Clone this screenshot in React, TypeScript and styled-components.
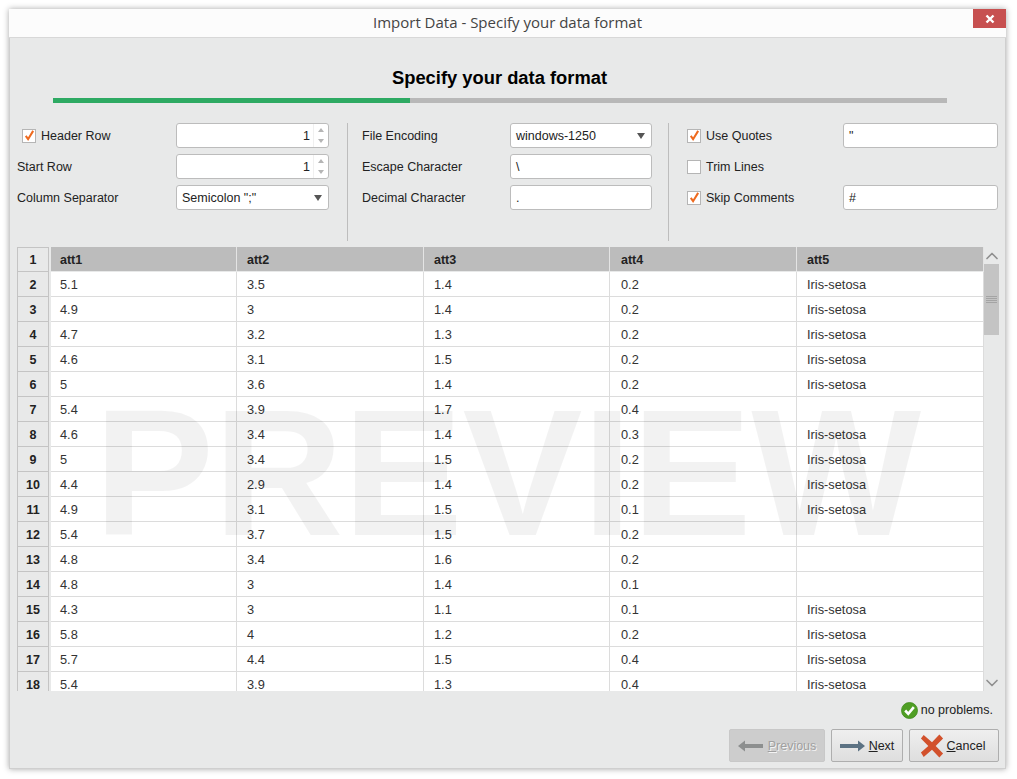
import React from "react";
import styled, { createGlobalStyle } from "styled-components";
import { ChevronUp, ChevronDown } from "lucide-react";

const GlobalStyle = createGlobalStyle`
  html, body {
    margin: 0;
    padding: 0;
    background: #fff;
    font-family: "Liberation Sans", Arial, sans-serif;
  }
`;

const Page = styled.div`
  width: 1017px;
  height: 779px;
  padding: 9px 9px 10px 9px;
  box-sizing: border-box;
`;

const Window = styled.div`
  width: 997px;
  height: 760px;
  box-sizing: border-box;
  display: flex;
  flex-direction: column;
  background: #e8e9e9;
  border: 1px solid #cfcfcf;
  border-top: none;
  box-shadow: 0 0 6px rgba(0, 0, 0, 0.35);
`;

const TitleBar = styled.div`
  height: 28px;
  flex: none;
  position: relative;
  display: flex;
  align-items: center;
  justify-content: center;
  box-sizing: content-box;
  padding-bottom: 0;
  background: #fcfcfc;
  border-bottom: 1px solid #d8d8d8;
  margin: 0 -1px;
  font-family: "Open Sans", sans-serif;
  font-size: 15px;
  line-height: 26px;
  color: #444;
`;

const TitleText = styled.span`
  margin-bottom: 2px;
`;

const CloseButton = styled.div`
  position: absolute;
  top: 0;
  right: 0;
  width: 33px;
  height: 19px;
  display: flex;
  align-items: center;
  justify-content: center;
  background: #c75050;
`;

const Heading = styled.h1`
  margin: 29px 0 0;
  height: 21px;
  line-height: 21px;
  padding-right: 16px;
  text-align: center;
  font-size: 18.35px;
  font-weight: bold;
  color: #000;
`;

const Progress = styled.div`
  margin: 10px 0 0 43px;
  width: 894px;
  height: 5px;
  flex: none;
  background: #b8b8b8;
`;

const ProgressFill = styled.div`
  height: 100%;
  background: #2eaa63;
`;

const Form = styled.div`
  display: flex;
  height: 118px;
  margin-top: 20px;
  flex: none;
`;

const FormColumn = styled.div<{ $width: number; $left: number; $divider?: boolean }>`
  width: ${(p) => p.$width}px;
  padding-left: ${(p) => p.$left}px;
  box-sizing: border-box;
  display: flex;
  flex-direction: column;
  gap: 6px;
  border-left: ${(p) => (p.$divider ? "1px solid #bdbdbd" : "none")};
`;

const FormRow = styled.div`
  display: flex;
  align-items: center;
  height: 25px;
`;

const Label = styled.label<{ $width: number; $indent?: number }>`
  width: ${(p) => p.$width}px;
  padding-left: ${(p) => p.$indent || 0}px;
  box-sizing: border-box;
  flex: none;
  display: flex;
  align-items: center;
  gap: 5px;
  font-size: 12.5px;
  color: #222;
`;

const Field = styled.div<{ $width: number }>`
  width: ${(p) => p.$width}px;
  height: 25px;
  box-sizing: border-box;
  display: flex;
  align-items: center;
  padding: 0 5px;
  background: #fff;
  border: 1px solid #bcbcbc;
  border-radius: 3px;
  font-size: 12.5px;
  color: #222;
`;

const FieldText = styled.span<{ $right?: boolean }>`
  flex: 1;
  text-align: ${(p) => (p.$right ? "right" : "left")};
`;

const Spinner = styled.div`
  width: 13px;
  margin-right: -4px;
  margin-left: 3px;
  height: 100%;
  display: flex;
  flex-direction: column;
  align-items: center;
  justify-content: center;
  gap: 7px;
  border-left: 1px solid #f0f0f0;
`;

const TriangleUp = styled.span`
  width: 0;
  height: 0;
  border-left: 3px solid transparent;
  border-right: 3px solid transparent;
  border-bottom: 4px solid #b5b5b5;
`;

const TriangleDown = styled.span`
  width: 0;
  height: 0;
  border-left: 3px solid transparent;
  border-right: 3px solid transparent;
  border-top: 4px solid #b5b5b5;
`;

const SelectArrow = styled.span`
  width: 0;
  height: 0;
  margin-right: 1px;
  border-left: 4px solid transparent;
  border-right: 4px solid transparent;
  border-top: 6px solid #555;
`;

const Box = styled.span`
  width: 14px;
  height: 14px;
  flex: none;
  box-sizing: border-box;
  background: #fff;
  border: 1px solid #b5b5b5;
  display: flex;
  align-items: center;
  justify-content: center;
`;

const TableArea = styled.div`
  display: flex;
  margin: 6px 0 0 7px;
  height: 444px;
  flex: none;
`;

const TableClip = styled.div`
  position: relative;
  width: 967px;
  height: 444px;
  overflow: hidden;
`;

const Grid = styled.div`
  display: grid;
  grid-template-columns: 34px 186px 187px 186px 187px 187px;
  grid-auto-rows: 25px;
`;

const RowHead = styled.div<{ $first?: boolean }>`
  box-sizing: border-box;
  width: 32px;
  height: 25px;
  display: flex;
  align-items: center;
  justify-content: center;
  padding-top: ${(p) => (p.$first ? 0 : 1)}px;
  background: #e8e9e9;
  border: 1px solid #c4c4c4;
  border-top-width: ${(p) => (p.$first ? 1 : 0)}px;
  font-size: 12.5px;
  font-weight: bold;
  color: #222;
`;

const HeadCell = styled.div<{ $pad: number }>`
  box-sizing: border-box;
  height: 24px;
  display: flex;
  align-items: center;
  padding: 2px 0 0 ${(p) => p.$pad}px;
  background: #bcbcbc;
  border-right: 1px solid #e4e4e4;
  font-size: 12.5px;
  font-weight: bold;
  color: #222;
`;

const Cell = styled.div<{ $pad: number }>`
  box-sizing: border-box;
  height: 25px;
  display: flex;
  align-items: center;
  padding: 1px 0 0 ${(p) => p.$pad}px;
  background: #fff;
  border-right: 1px solid #dcdcdc;
  border-bottom: 1px solid #dcdcdc;
  font-size: 12.8px;
  color: #333;
`;

const Watermark = styled.div`
  position: absolute;
  left: 77px;
  top: 136px;
  font-size: 180px;
  line-height: 180px;
  letter-spacing: -0.5px;
  font-weight: bold;
  color: rgba(0, 0, 0, 0.05);
  pointer-events: none;
  white-space: nowrap;
`;

const ScrollBar = styled.div`
  width: 15px;
  display: flex;
  flex-direction: column;
  align-items: center;
  color: #8f8f8f;
`;

const ScrollArrow = styled.div`
  height: 17px;
  flex: none;
  display: flex;
  align-items: center;
  justify-content: center;
`;

const ScrollTrack = styled.div`
  flex: 1;
  width: 100%;
`;

const ScrollThumb = styled.div`
  width: 100%;
  height: 71px;
  background: #c4c4c4;
  display: flex;
  flex-direction: column;
  align-items: center;
  justify-content: center;
  gap: 1px;
`;

const Grip = styled.span`
  width: 11px;
  height: 1px;
  background: #a4a4a4;
`;

const Status = styled.div`
  display: flex;
  align-items: center;
  justify-content: flex-end;
  gap: 3px;
  height: 18px;
  margin: 10px 12px 0 0;
  font-size: 12.5px;
  color: #222;
  flex: none;
`;

const Footer = styled.div`
  display: flex;
  justify-content: flex-end;
  gap: 6px;
  margin: 10px 6px 0 0;
  flex: none;
`;

const Button = styled.div<{ $width: number; $disabled?: boolean }>`
  width: ${(p) => p.$width}px;
  height: 33px;
  box-sizing: border-box;
  display: flex;
  align-items: center;
  justify-content: center;
  gap: 4px;
  border: 1px solid ${(p) => (p.$disabled ? "#c8c8c8" : "#aeaeae")};
  border-radius: 2px;
  background: ${(p) => (p.$disabled ? "#cdcdcd" : "linear-gradient(#efefef, #dedede)")};
  font-size: 12.5px;
  color: ${(p) => (p.$disabled ? "#a0a0a0" : "#222")};
  text-shadow: ${(p) => (p.$disabled ? "1px 1px 0 #f4f4f4" : "none")};

  u {
    text-underline-offset: 1px;
  }
`;

const CancelLabel = styled.span`
  margin: 0 3px 0 -1px;
`;

const Check = () => (
  <Box>
    <svg width="13" height="13" viewBox="0 0 13 13">
      <path d="M3 7 L5.5 10.5 L11 1.5" fill="none" stroke="#ee6a1f" strokeWidth="2.2" />
    </svg>
  </Box>
);

const Spin = () => (
  <Spinner>
    <TriangleUp />
    <TriangleDown />
  </Spinner>
);

const rows: [string, string, string, string, string][] = [
  ["5.1", "3.5", "1.4", "0.2", "Iris-setosa"],
  ["4.9", "3", "1.4", "0.2", "Iris-setosa"],
  ["4.7", "3.2", "1.3", "0.2", "Iris-setosa"],
  ["4.6", "3.1", "1.5", "0.2", "Iris-setosa"],
  ["5", "3.6", "1.4", "0.2", "Iris-setosa"],
  ["5.4", "3.9", "1.7", "0.4", ""],
  ["4.6", "3.4", "1.4", "0.3", "Iris-setosa"],
  ["5", "3.4", "1.5", "0.2", "Iris-setosa"],
  ["4.4", "2.9", "1.4", "0.2", "Iris-setosa"],
  ["4.9", "3.1", "1.5", "0.1", "Iris-setosa"],
  ["5.4", "3.7", "1.5", "0.2", ""],
  ["4.8", "3.4", "1.6", "0.2", ""],
  ["4.8", "3", "1.4", "0.1", ""],
  ["4.3", "3", "1.1", "0.1", "Iris-setosa"],
  ["5.8", "4", "1.2", "0.2", "Iris-setosa"],
  ["5.7", "4.4", "1.5", "0.4", "Iris-setosa"],
  ["5.4", "3.9", "1.3", "0.4", "Iris-setosa"],
];

// text inset per column, the column lines are not evenly spaced
const pads = [9, 10, 10, 11, 10];

const App = () => {
  return (
    <Page>
      <GlobalStyle />
      <Window>
        <TitleBar>
          <TitleText>Import Data - Specify your data format</TitleText>
          <CloseButton>
            <svg width="10" height="10" viewBox="0 0 10 10">
              <path d="M1.5 1.5 L8.5 8.5 M8.5 1.5 L1.5 8.5" stroke="#fff" strokeWidth="2.4" />
            </svg>
          </CloseButton>
        </TitleBar>
        <Heading>Specify your data format</Heading>
        <Progress>
          <ProgressFill style={{ width: "39.9%" }} />
        </Progress>
        <Form>
          <FormColumn $width={337} $left={7}>
            <FormRow>
              <Label $width={159} $indent={5}>
                <Check />
                Header Row
              </Label>
              <Field $width={153}>
                <FieldText $right>1</FieldText>
                <Spin />
              </Field>
            </FormRow>
            <FormRow>
              <Label $width={159}>Start Row</Label>
              <Field $width={153}>
                <FieldText $right>1</FieldText>
                <Spin />
              </Field>
            </FormRow>
            <FormRow>
              <Label $width={159}>Column Separator</Label>
              <Field $width={153}>
                <FieldText>Semicolon ";"</FieldText>
                <SelectArrow />
              </Field>
            </FormRow>
          </FormColumn>
          <FormColumn $width={321} $left={14} $divider>
            <FormRow>
              <Label $width={148}>File Encoding</Label>
              <Field $width={142}>
                <FieldText>windows-1250</FieldText>
                <SelectArrow />
              </Field>
            </FormRow>
            <FormRow>
              <Label $width={148}>Escape Character</Label>
              <Field $width={142}>\</Field>
            </FormRow>
            <FormRow>
              <Label $width={148}>Decimal Character</Label>
              <Field $width={142}>.</Field>
            </FormRow>
          </FormColumn>
          <FormColumn $width={337} $left={18} $divider>
            <FormRow>
              <Label $width={156}>
                <Check />
                Use Quotes
              </Label>
              <Field $width={155}>"</Field>
            </FormRow>
            <FormRow>
              <Label $width={156}>
                <Box />
                Trim Lines
              </Label>
            </FormRow>
            <FormRow>
              <Label $width={156}>
                <Check />
                Skip Comments
              </Label>
              <Field $width={155}>#</Field>
            </FormRow>
          </FormColumn>
        </Form>
        <TableArea>
          <TableClip>
            <Grid>
              <RowHead $first>1</RowHead>
              {["att1", "att2", "att3", "att4", "att5"].map((h, j) => (
                <HeadCell key={h} $pad={pads[j]}>
                  {h}
                </HeadCell>
              ))}
              {rows.map((r, i) => (
                <React.Fragment key={i}>
                  <RowHead>{i + 2}</RowHead>
                  {r.map((c, j) => (
                    <Cell key={j} $pad={pads[j]}>
                      {c}
                    </Cell>
                  ))}
                </React.Fragment>
              ))}
            </Grid>
            <Watermark>PREVIEW</Watermark>
          </TableClip>
          <ScrollBar>
            <ScrollArrow>
              <ChevronUp size={20} strokeWidth={2} />
            </ScrollArrow>
            <ScrollTrack>
              <ScrollThumb>
                <Grip />
                <Grip />
                <Grip />
                <Grip />
              </ScrollThumb>
            </ScrollTrack>
            <ScrollArrow>
              <ChevronDown size={20} strokeWidth={2} />
            </ScrollArrow>
          </ScrollBar>
        </TableArea>
        <Status>
          <svg width="17" height="17" viewBox="0 0 17 17">
            <circle cx="8.5" cy="8.5" r="8" fill="#4f9e24" stroke="#3f8a1c" strokeWidth="0.8" />
            <path d="M4.2 8.5 L7.3 11.8 L12.8 5.2" fill="none" stroke="#fff" strokeWidth="2.6" />
          </svg>
          no problems.
        </Status>
        <Footer>
          <Button $width={96} $disabled>
            <svg width="26" height="12" viewBox="0 0 26 12">
              <path d="M0 6 L7 0.5 L7 4 L25 4 L25 8 L7 8 L7 11.5 Z" fill="#8d8f8f" />
            </svg>
            <span>
              <u>P</u>revious
            </span>
          </Button>
          <Button $width={72}>
            <svg width="25" height="12" viewBox="0 0 25 12">
              <path d="M25 6 L18 0.5 L18 4 L0 4 L0 8 L18 8 L18 11.5 Z" fill="#5c7283" />
            </svg>
            <span>
              <u>N</u>ext
            </span>
          </Button>
          <Button $width={90}>
            <svg width="24" height="24" viewBox="0 0 26 26">
              <path
                d="M4 1 L13 9 L21 0.5 L25 5 L17 13 L25 21 L21 25.5 L13 17 L4 25 L1 20 L9 13 L1 5 Z"
                fill="#d2512c"
              />
            </svg>
            <CancelLabel>
              <u>C</u>ancel
            </CancelLabel>
          </Button>
        </Footer>
      </Window>
    </Page>
  );
};

export default App;
